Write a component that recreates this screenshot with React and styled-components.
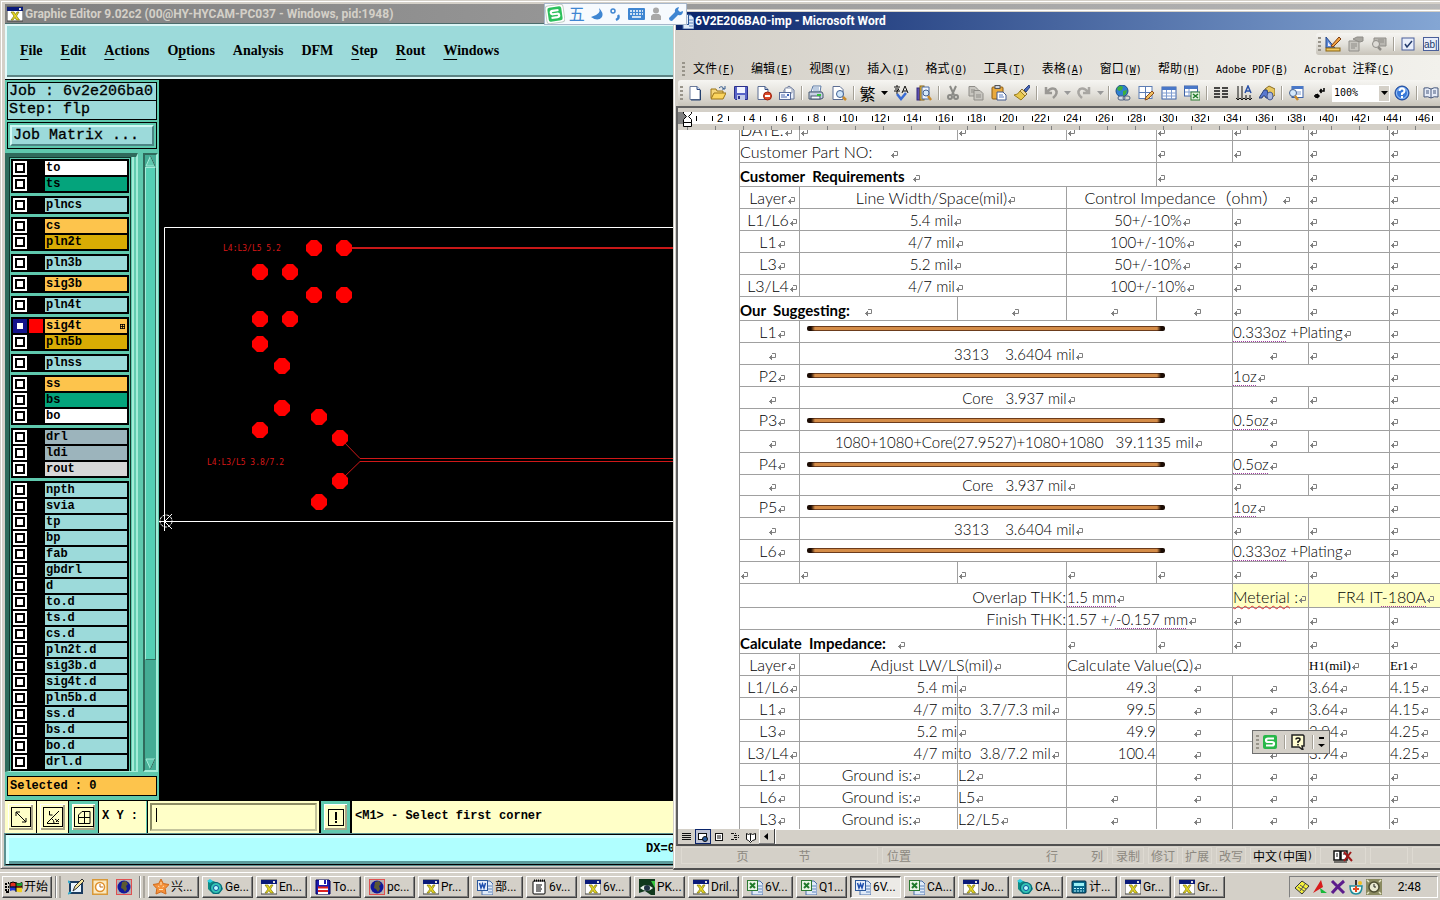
import React from "react";
import styled, { createGlobalStyle, css } from "styled-components";

const ui = `"Liberation Sans", "Noto Sans CJK SC", sans-serif`;
const tahoma = `"Noto Sans", "Noto Sans CJK SC", sans-serif`;
const caption = `Roboto, "Noto Sans CJK SC", sans-serif`;
const mono = `"Liberation Mono", monospace`;
const hand = `"Comic Sans MS", Lato, "Noto Sans CJK SC", sans-serif`;

const GlobalStyle = createGlobalStyle`
  * { box-sizing: border-box; }
  body {
    margin: 0;
    font-family: ${ui};
    font-size: 12px;
    color: #000;
    background: #d4d0c8;
  }
  button, input, select {
    margin: 0;
    padding: 0;
    border: 0;
    border-radius: 0;
    background: none;
    font: inherit;
    color: inherit;
  }
  svg { display: block; flex: none; }
`;

/* ---------- icons ---------- */

const shapes = {
  xwin: (
    <>
      <rect x="0" y="1" width="16" height="14" fill="#fff" stroke="#404040" />
      <rect x="0" y="1" width="16" height="4" fill="#0a1a7a" />
      <rect x="12" y="2" width="2" height="2" fill="#ddd" />
      <path d="M4 6h3l1.500 2.500L10 6h2l-2.500 4 3 4h-3L8 11.500 6 14H4l3-4z" fill="#e8d820" stroke="#7a7410" strokeWidth=".7" />
    </>
  ),
  excel: (
    <>
      <path d="M5 2h8l3 3v11H5z" fill="#dfeaf8" stroke="#4a6fa8" />
      <path d="M11 7h4M11 10h4M11 13h4" stroke="#5c83bb" />
      <rect x="0.500" y="1.500" width="10" height="10" fill="#e9f4e4" stroke="#2c7a33" />
      <path d="M3 4l5 5M8 4L3 9" stroke="#1f7a2a" strokeWidth="2" />
    </>
  ),
  word: (
    <>
      <path d="M5 2h8l3 3v11H5z" fill="#dfeaf8" stroke="#4a6fa8" />
      <path d="M11 7h4M11 10h4M11 13h4" stroke="#5c83bb" />
      <rect x="0.500" y="1.500" width="10" height="10" fill="#e8effa" stroke="#2b579a" />
      <path d="M2.500 4l1.500 5 1.500-4L7 9l1.500-5" fill="none" stroke="#1d4fae" strokeWidth="1.500" />
    </>
  ),
  star: (
    <>
      <path d="M8 0l2.300 4.600L16 5.500l-3.800 4L13 15l-5-2.200L3 15l.8-5.500L0 5.500l5.700-.9z" fill="#f5923c" stroke="#cf6a1c" />
      <path d="M5 7l1.500 1M11 7L9.500 8M6 10.500h4M8 3v3" stroke="#ffe2b8" />
    </>
  ),
  disc: (
    <>
      <path d="M1 3l5-1 8 3 2 5-4 5H6L1 10z" fill="#0c8b84" />
      <circle cx="9" cy="9" r="5.500" fill="#33c3b4" stroke="#075d74" />
      <circle cx="9" cy="9" r="2.500" fill="#bff" stroke="#0b4c9a" />
      <path d="M0 2l3-2 3 2-3 2z" fill="#24d0e4" />
    </>
  ),
  floppy2: (
    <>
      <path d="M1 1h13l1 1v13H1z" fill="#1a1ab0" stroke="#000058" />
      <rect x="4" y="1" width="8" height="5" fill="#fff" />
      <rect x="9" y="1" width="2" height="4" fill="#1a1ab0" />
      <rect x="3" y="8" width="10" height="7" fill="#fff" />
      <path d="M3 8.500h10M3 12h10" stroke="#d22" strokeWidth="2" />
    </>
  ),
  globe2: (
    <>
      <rect width="16" height="16" fill="#b8aeb0" />
      <rect x=".5" y=".5" width="15" height="15" fill="none" stroke="#e05050" />
      <circle cx="8" cy="8" r="6.500" fill="#10189a" />
      <path d="M6 3l4-1 2 3-2 2 1 3-2 3-2-3-2-1z" fill="#5c5a30" />
    </>
  ),
  note: (
    <>
      <rect x="2" y="2" width="12" height="13" rx="1" fill="#fff" stroke="#000" />
      <path d="M3 1.500h11" stroke="#000" strokeWidth="2" strokeDasharray="1 1" />
      <path d="M5 6h6M5 8h5M5 10h6M5 12h5" stroke="#000" />
    </>
  ),
  eye: (
    <>
      <rect width="16" height="16" fill="#10381c" />
      <path d="M0 2h12l4 7V2z" fill="#38c840" />
      <path d="M1 9q6-6 13 0-6 6-13 0z" fill="#e8f0e8" />
      <circle cx="8" cy="9" r="3" fill="#234" />
      <path d="M0 14l6-2 6 4H0z" fill="#ccc" />
    </>
  ),
  calc: (
    <>
      <rect x="1" y="2" width="14" height="12" rx="1" fill="#0a6a8c" stroke="#012c44" />
      <rect x="3" y="4" width="10" height="3" fill="#9cf0f4" />
      <path d="M3 9.500h10M3 12h10" stroke="#bff6ff" strokeDasharray="2 1" />
    </>
  ),
  flag: (
    <>
      <path d="M5 4q3-2 6 0t6-.5v6q-3 1-6 0t-6 0z" fill="#e03020" stroke="#000" />
      <path d="M11 4q3 1 6-.5v3q-3 1-6 0z" fill="#18a030" />
      <path d="M5 8q3-1.500 6 0v4q-3-1.500-6 0z" fill="#2038d0" />
      <path d="M11 8q3 1 6 0v5q-3 1-6-1z" fill="#f0d020" />
      <path d="M0 5h2M3 4h1M0 8h2M3 8h1M0 11h2M3 11h1M1 13h3" stroke="#000" strokeWidth="2" />
      <path d="M11 3v10M5 8h12" stroke="#000" />
    </>
  ),
  desk: (
    <>
      <rect x="1" y="2" width="14" height="13" fill="#1c3c60" />
      <rect x="3" y="4" width="10" height="9" fill="#e8f4ff" />
      <path d="M5 12l2-5 7-7 2 2-7 7z" fill="#f4e4a0" stroke="#333" />
      <path d="M0 2l2 2M0 15l3-2" stroke="#3ac" strokeWidth="2" />
    </>
  ),
  clock: (
    <>
      <rect x=".5" y=".5" width="15" height="15" fill="#fbe9c0" stroke="#d89838" strokeWidth="2" />
      <circle cx="8" cy="8" r="4.500" fill="#fff" stroke="#e0902c" strokeWidth="1.500" />
      <path d="M8 5v3h3" stroke="#b86a10" fill="none" />
    </>
  ),
  newDoc: (
    <>
      <path d="M3 1.500h7l3 3v10H3z" fill="#fff" stroke="#6b7a99" />
      <path d="M10 1.500v3h3" fill="#cfdcf2" stroke="#2f4a80" />
      <path d="M13.500 5v10H4" stroke="#24406e" fill="none" />
    </>
  ),
  open: (
    <>
      <path d="M1 13V4h5l1 2h6v2" fill="#f5d67c" stroke="#9b7416" />
      <path d="M1 14l3-6h12l-3 6z" fill="#fbd55e" stroke="#9b7416" />
      <path d="M9 3q3-3 5 1M15 1v3h-3" fill="none" stroke="#33598c" />
    </>
  ),
  save: (
    <>
      <path d="M1.500 1.500h13v13h-12l-1-1z" fill="#5964c8" stroke="#2b2f8a" />
      <rect x="4" y="2" width="8" height="6" fill="#f2f4ff" />
      <rect x="4" y="10" width="8" height="5" fill="#c4cbe8" />
      <rect x="5" y="11" width="2" height="3" fill="#2b2f8a" />
    </>
  ),
  perm: (
    <>
      <path d="M2 1.500h7l3 3v10H2z" fill="#fff" stroke="#5b6d93" />
      <path d="M9 1.500v3h3" fill="none" stroke="#2f4a80" />
      <circle cx="11.500" cy="11" r="4" fill="#dd4a2a" stroke="#9c220e" />
      <rect x="9" y="10" width="5" height="2" fill="#fff" />
    </>
  ),
  mail: (
    <>
      <path d="M5 5l5-4 5 4v9H5z" fill="#e8eefa" stroke="#6a7898" />
      <path d="M6 3h7v5H6z" fill="#fff" stroke="#8a95ad" />
      <rect x="0.500" y="7.500" width="11" height="7" fill="#f5f8ff" stroke="#5a6c98" />
      <path d="M2 10h4M2 12h6" stroke="#4a66a8" />
      <rect x="8" y="9" width="2" height="2" fill="#3b62b8" />
    </>
  ),
  print: (
    <>
      <path d="M5 1h8l-1 6H3z" fill="#fff" stroke="#5c7aa6" />
      <path d="M5 3h6M5 5h6" stroke="#7a9ac4" />
      <path d="M1 7h13l1 2v4l-2 1H1z" fill="#c8d2e4" stroke="#44566f" />
      <rect x="3" y="11" width="9" height="3" fill="#f8faff" stroke="#44566f" />
      <rect x="9" y="9" width="4" height="2" fill="#33c43a" />
    </>
  ),
  preview: (
    <>
      <path d="M2 1.500h7l3 3v10H2z" fill="#fff" stroke="#5b6d93" />
      <circle cx="9" cy="9" r="3.500" fill="#cfe6fb" stroke="#3f5f90" />
      <path d="M12 12l3 3" stroke="#c98b2c" strokeWidth="2.500" />
    </>
  ),
  spell: (
    <>
      <path d="M1 2h6M4 0v2M2 4h4L4 6v3M1 6h6" stroke="#111" fill="none" />
      <path d="M9 8l3-7 3 7M10 6h4" stroke="#111" fill="none" />
      <path d="M4 9l4 5 5-6" stroke="#3a6cd4" strokeWidth="2.500" fill="none" />
    </>
  ),
  research: (
    <>
      <rect x="1" y="3" width="3" height="12" fill="#5b4fb0" stroke="#33297c" />
      <rect x="4" y="1" width="4" height="14" fill="#f2c34a" stroke="#8a6410" />
      <path d="M6 2h7v12H6z" fill="#eef4ff" stroke="#4b6aa0" />
      <circle cx="10" cy="8" r="3" fill="#d4e8fb" stroke="#44608f" />
      <path d="M12 11l3 4" stroke="#c98b2c" strokeWidth="2.500" />
    </>
  ),
  cut: (
    <>
      <path d="M5 1l4 9M11 1L7 10" stroke="#8a8a86" strokeWidth="2" />
      <circle cx="5" cy="12" r="2" fill="none" stroke="#8a8a86" strokeWidth="2" />
      <circle cx="11" cy="12" r="2" fill="none" stroke="#8a8a86" strokeWidth="2" />
    </>
  ),
  copy: (
    <>
      <path d="M1 1.500h6l3 3V11H1z" fill="#c8c6c0" stroke="#8f8d88" />
      <path d="M6 5.500h6l3 3V15H6z" fill="#c8c6c0" stroke="#8f8d88" />
      <path d="M3 5h4M3 7h3M8 10h5M8 12h5" stroke="#8f8d88" />
    </>
  ),
  paste: (
    <>
      <rect x="1" y="2" width="11" height="12" rx="1" fill="#e9a93c" stroke="#8a5a10" />
      <rect x="4" y="0.500" width="5" height="3" fill="#ccd4e4" stroke="#555" />
      <path d="M6 7h6l3 3v5H6z" fill="#fff" stroke="#41588c" />
      <path d="M8 10h4M8 12h5" stroke="#5b7cc0" />
    </>
  ),
  brush: (
    <>
      <path d="M15 0l-5 5 2 2 4-5z" fill="#4c69b8" stroke="#28407c" />
      <path d="M8 4l5 5-2 2-5-5z" fill="#f0d890" stroke="#8a7030" />
      <path d="M6 6l5 5-4 4-7-5q4 0 6-4z" fill="#e8c84c" stroke="#9a7c20" />
    </>
  ),
  undo: <path d="M3 2v6h6M4 7q4-5 8-3 4 4-2 9" fill="none" stroke="#9a9894" strokeWidth="2.500" />,
  redo: <path d="M13 2v6H7M12 7Q8 2 4 4q-4 4 2 9" fill="none" stroke="#a8a6a2" strokeWidth="2.500" />,
  link: (
    <>
      <circle cx="7" cy="6" r="6" fill="#2f7fd0" stroke="#1c4f88" />
      <path d="M3 2q3-2 5 0l-1 3-3 1-2-2zM8 6l4-1-1 4-3 2z" fill="#3fae3c" />
      <rect x="3" y="11" width="7" height="4" rx="2" fill="#d5dce8" stroke="#4c5f80" />
      <rect x="8" y="11" width="7" height="4" rx="2" fill="none" stroke="#4c5f80" />
    </>
  ),
  drawTable: (
    <>
      <rect x="1" y="1.500" width="13" height="12" fill="#fff" stroke="#5b7cb4" />
      <path d="M7.500 2v12M1 7.500h13" stroke="#5b7cb4" />
      <path d="M7 15l1-3 6-6 2 2-6 6z" fill="#f0c060" stroke="#8a4c20" />
    </>
  ),
  table: (
    <>
      <rect x="1" y="2" width="14" height="12" fill="#fff" stroke="#3d63a8" />
      <rect x="1" y="2" width="14" height="3" fill="#4a78c8" />
      <path d="M1 8h14M1 11h14M5.500 5v9M10.500 5v9" stroke="#7e9cd0" />
    </>
  ),
  sheet: (
    <>
      <rect x="0.500" y="1" width="13" height="10" fill="#fff" stroke="#3d63a8" />
      <rect x="0.500" y="1" width="13" height="3" fill="#4a78c8" />
      <path d="M1 7h12M5 4v7" stroke="#7e9cd0" />
      <rect x="7" y="7" width="9" height="8" fill="#e4f2e0" stroke="#2c7a33" />
      <path d="M9 9l5 4M14 9l-5 4" stroke="#1f7a2a" strokeWidth="1.500" />
    </>
  ),
  columns: <path d="M1 3h6M1 6h6M1 9h6M1 12h6M9 3h6M9 6h6M9 9h6M9 12h6" stroke="#111" strokeWidth="1.500" />,
  textDir: (
    <>
      <path d="M2 1v13M6 1v13M10 10v4M14 10v4M0 13l2 2 2-2M4 13l2 2 2-2M8 13l2 2 2-2M12 13l2 2 2-2" stroke="#111" fill="none" />
      <path d="M9 8l3-7 3 7M10 6h4" stroke="#2a52a8" strokeWidth="1.500" fill="none" />
    </>
  ),
  drawing: (
    <>
      <path d="M6 4l4-3 6 3v6l-4 3-6-3z" fill="#e8c860" stroke="#8a6c20" />
      <path d="M0 13l5-8h3l2 8H7l-1-2H4l-1 2z" fill="#5878d0" stroke="#28407c" />
      <ellipse cx="11" cy="11" rx="3" ry="4" fill="#a8b8e0" stroke="#44568c" />
    </>
  ),
  docMap: (
    <>
      <rect x="4" y="1.500" width="11" height="11" fill="#fff" stroke="#3d63a8" />
      <rect x="4" y="1" width="11" height="3" fill="#4a78c8" />
      <path d="M8 7h5M8 9h5" stroke="#7e9cd0" />
      <circle cx="5" cy="8" r="3.500" fill="#d4e8fb" stroke="#44608f" />
      <path d="M7 11l3 4" stroke="#c98b2c" strokeWidth="2.500" />
    </>
  ),
  marks: (
    <>
      <path d="M13 3v3H9M10.500 4L9 6l1.500 2" fill="none" stroke="#000" strokeWidth="1.500" />
      <path d="M3 11h5M6 9l2 2-2 2M5 9v4" fill="none" stroke="#000" strokeWidth="1.500" />
    </>
  ),
  help: (
    <>
      <circle cx="8" cy="8" r="7" fill="#3878d8" stroke="#1c4494" />
      <circle cx="8" cy="8" r="5.500" fill="none" stroke="#9cc4f8" />
      <path d="M5.500 6q0-2.500 2.500-2.500T10.500 6Q10.500 7.500 8 8.500V10M8 11v2" fill="none" stroke="#fff" strokeWidth="2" />
    </>
  ),
  read: (
    <>
      <path d="M1 3q4-1 7 1 3-2 7-1v9q-4-1-7 1-3-2-7-1z" fill="#e6ecf8" stroke="#47587c" />
      <path d="M8 4v9M3 6h3M3 8h3M10 6h3M10 8h3" stroke="#47587c" />
    </>
  ),
  design: (
    <>
      <path d="M1 1v11h9z" fill="#5c8ad8" stroke="#24488c" />
      <path d="M3 6v4h3z" fill="#eef" />
      <rect x="1" y="12" width="14" height="3" fill="#f0c860" stroke="#8a6410" />
      <path d="M6 10l8-9 2 2-8 8z" fill="#f0a040" stroke="#7c3c10" />
    </>
  ),
  props: (
    <>
      <path d="M1 5h10v10H1z" fill="#c8c6c0" stroke="#8f8d88" />
      <path d="M3 8h6M3 10h6M3 12h4" stroke="#8f8d88" />
      <path d="M5 3l4-2h6v4l-3 1-3-1z" fill="#a8a6a0" stroke="#8f8d88" />
    </>
  ),
  code: (
    <>
      <path d="M3 2h12v8H3z" fill="#b8b6b0" stroke="#8f8d88" />
      <path d="M7 4h6M7 6h6" stroke="#8f8d88" />
      <circle cx="5" cy="8" r="3.500" fill="#dddbd6" stroke="#8f8d88" />
      <path d="M7 11l3 3" stroke="#8f8d88" strokeWidth="2.500" />
    </>
  ),
  tick: (
    <>
      <rect x="2" y="2" width="12" height="12" fill="#e8eefb" stroke="#4a5f9a" />
      <path d="M5 8l2 3 5-6" stroke="#223a6c" strokeWidth="1.500" fill="none" />
    </>
  ),
  viewLines: <path d="M3 4.500h9M3 6.500h9M3 8.500h9M3 10.500h9" stroke="#111" />,
  viewWeb: (
    <>
      <rect x="3.500" y="4.500" width="8" height="6" fill="#fff" stroke="#111" />
      <circle cx="10" cy="10" r="2.500" fill="#2a5ca0" stroke="#111" />
    </>
  ),
  viewPrint: (
    <>
      <rect x="4.500" y="4.500" width="7" height="7" fill="#fff" stroke="#111" />
      <path d="M6 7h4M6 9h4" stroke="#111" />
    </>
  ),
  viewOutline: <path d="M4 4.500h5M7 6.500h5M7 8.500h5M4 10.500h6" stroke="#111" strokeDasharray="3 1" />,
  viewRead: <path d="M3.500 4.500l2 1 2-1 2 1 3-1v6l-3 1-2 2-2-2-2-1zM7.500 5v7" fill="#fff" stroke="#111" />,
  bookX: (
    <>
      <path d="M1 3h6v9H1zM8 3h6v9H8z" fill="#fff" stroke="#111" strokeWidth="1.500" />
      <path d="M3 6h2M3 8h2M10 6h2M1 14h13" stroke="#111" />
      <path d="M11 4l8 9M18 4l-7 9" stroke="#a01818" strokeWidth="2" />
    </>
  ),
  sLogo: (
    <>
      <rect x="1" y="1" width="14" height="14" rx="2" fill="#28b84a" />
      <path d="M12 4.500H6q-2 0-2 1.700T6 8h4q2 0 2 1.700t-2 1.800H4" fill="none" stroke="#fff" strokeWidth="2.200" />
    </>
  ),
  sLogoTilt: (
    <g transform="rotate(-8 10 10)">
      <rect x="1" y="1" width="18" height="18" rx="3" fill="#fff" stroke="#c4d0c8" />
      <rect x="3" y="3" width="14" height="14" rx="2" fill="#2cc05c" />
      <path d="M14 6.500H8q-2 0-2 1.700T8 10h4q2 0 2 1.700t-2 1.800H6" fill="none" stroke="#fff" strokeWidth="2.200" />
    </g>
  ),
  ask: (
    <>
      <path d="M2 1h11l1 1v10h-2l1 4-4-3H2z" fill="#fffcd0" stroke="#222" strokeWidth="1.500" />
      <path d="M6 5.500q0-1.500 2-1.500t2 1.500Q10 7 8 7.500V9M8 10v1.500" fill="none" stroke="#111" strokeWidth="1.500" />
    </>
  ),
  moon: <path d="M11 2q3 6-8 9 7 5 11 0 2-4-3-9z" fill="#3f86d2" />,
  punct: (
    <>
      <circle cx="5" cy="5" r="2" fill="none" stroke="#3f86d2" strokeWidth="1.500" />
      <path d="M10 9q2 3-2 5" fill="none" stroke="#3f86d2" strokeWidth="2.500" />
    </>
  ),
  keyboard: (
    <>
      <rect x="0" y="2" width="17" height="12" rx="1" fill="#3f86d2" />
      <path d="M2 5h13M2 8h13" stroke="#fff" strokeWidth="1.500" strokeDasharray="2 1" />
      <path d="M4 11h9" stroke="#fff" strokeWidth="1.500" />
    </>
  ),
  person: (
    <>
      <circle cx="8" cy="4.500" r="3" fill="#a8a8a8" />
      <path d="M3 14v-4l2-2h6l2 2v4z" fill="#a8a8a8" />
    </>
  ),
  wrench: <path d="M1 12l6-6q-1-4 4-5l-1 3 2 2 3-1q0 5-5 4l-6 6q-3 0-3-3z" fill="#3f86d2" />,
  tray1: (
    <>
      <path d="M1 9l7-7 7 5-7 8z" fill="#f4f03c" stroke="#333" />
      <path d="M4 8l6 4M6 6l6 4M6 12l5-7" stroke="#555" />
    </>
  ),
  tray2: (
    <>
      <path d="M9 1l2 7-10 6z" fill="#d81c1c" />
      <path d="M8 9l7 5h-6z" fill="#18b838" />
    </>
  ),
  tray3: <path d="M2 2q5 5 12 12M14 2Q8 7 2 14" stroke="#5c1c8c" strokeWidth="3" fill="none" />,
  tray4: (
    <>
      <path d="M2 7q0 8 6 8t6-8z" fill="#f8f8f0" stroke="#1c8c9c" strokeWidth="1.500" />
      <path d="M7 1h2v5H7z" fill="#333" />
      <path d="M5 10h6M8 7v6" stroke="#e04820" strokeWidth="2" />
      <circle cx="12" cy="4" r="2" fill="#f0c020" />
    </>
  ),
  tray5: (
    <>
      <rect width="16" height="16" fill="#8a8a60" />
      <circle cx="8" cy="8" r="5" fill="#e8e8d0" stroke="#4c4c30" strokeWidth="1.500" />
      <path d="M8 5v3l2 2M1 1l2 2M15 1l-2 2M1 15l2-2M15 15l-2-2" stroke="#e8e8c8" fill="none" strokeWidth="1.500" />
      <path d="M8 5v3h2" stroke="#222" fill="none" />
    </>
  ),
  corner: (
    <>
      <rect x=".5" y=".5" width="19" height="19" fill="none" stroke="#000" />
      <path d="M5 5l10 10M5 9V5h4M15 11v4h-4" fill="none" stroke="#000" />
    </>
  ),
  angle: (
    <>
      <rect x=".5" y=".5" width="19" height="19" fill="none" stroke="#000" />
      <path d="M4 16L16 4M4 16.500h12M6.500 4v4h3M9 12q2 1 2 4M12 12l4 3M16 12l-3 3" fill="none" stroke="#000" />
    </>
  ),
  gridIcon: (
    <>
      <rect x=".5" y=".5" width="19" height="19" fill="none" stroke="#000" />
      <path d="M8 4.500h8v12H4.500V8zM10.500 4v12M4 10.500h12" fill="none" stroke="#000" />
    </>
  ),
  bang: (
    <>
      <rect x=".5" y=".5" width="15" height="16" fill="none" stroke="#000" />
      <path d="M8 3v8M8 12v2" stroke="#000" strokeWidth="2" />
    </>
  ),
};

function Icon({ name, w = 16, h = 16 }) {
  return (
    <svg width={w} height={h} viewBox={`0 0 ${w} ${h}`} fill="none" aria-hidden="true">
      {shapes[name]}
    </svg>
  );
}

const MarkSvg = styled.svg`
  display: inline-block;
  vertical-align: -1px;
`;

function Mark() {
  return (
    <MarkSvg width="8" height="9" viewBox="0 0 8 9" fill="none" aria-hidden="true">
      <path d="M4 1.500h3.500v4H1M3.500 3v5M1.500 5.500l2-2v4z" stroke="#808080" />
    </MarkSvg>
  );
}

/* ---------- desktop ---------- */

const Screen = styled.div`
  height: 100vh;
  display: flex;
  flex-direction: column;
  overflow: hidden;
`;

const Desktop = styled.main`
  flex: 1;
  position: relative;
  overflow: hidden;
`;

/* ---------- graphic editor ---------- */

const EditorWindow = styled.section`
  position: absolute;
  inset: 0 -6px 3px 0;
  display: flex;
  flex-direction: column;
  padding: 2px 3px;
  background: #d4d0c8;
  border: 1px solid #d4d0c8;
  border-bottom-color: #606060;
  box-shadow: inset 1px 1px #fff, inset 0 -1px #a0a0a0;
`;

const EditorTitle = styled.header`
  flex: none;
  height: 19px;
  margin: 1px 0 1px 1px;
  padding-left: 2px;
  display: flex;
  align-items: center;
  gap: 2px;
  background: linear-gradient(90deg, #808080, #b8b8b8);
  color: #d4d0c8;
  font: bold 12px/18px ${caption};
`;

const MenuBar = styled.nav`
  flex: none;
  height: 55px;
  display: flex;
  align-items: center;
  gap: 18px;
  padding: 0 0 2px 13px;
  background: #9cdada;
  border: 2px solid #e4fafa;
  border-top: 2px solid #dcf6f6;
  border-bottom-color: #dcf6f6;
  box-shadow: inset 0 -2px #5c8484, 0 -1px #4c6c6c;
  margin-left: 1px;
`;

const MenuButton = styled.button`
  font: bold 14px/20px "Liberation Serif", serif;
`;

const Key = styled.span`
  text-decoration: underline;
  text-underline-offset: 4px;
`;

const EditorBody = styled.div`
  flex: 1;
  min-height: 0;
  display: flex;
  margin-left: 1px;
  background: #000;
`;

const Sidebar = styled.aside`
  width: 154px;
  display: flex;
  flex-direction: column;
  padding: 2px 2px 1px;
  background: #5fc9ae;
  border-top: 1px solid #000;
`;

const InfoLine = styled.div`
  flex: none;
  height: 19px;
  border: 1px solid #000;
  padding-left: 1px;
  background: #9cdada;
  font: 15px/17px ${mono};
  -webkit-text-stroke: 0.3px #000;
  white-space: pre;

  & + & {
    margin-top: -1px;
    height: 20px;
    line-height: 18px;
  }
`;

const MatrixFrame = styled.div`
  flex: none;
  height: 27px;
  margin-top: 2px;
  padding: 2px;
  display: flex;
  border: 1px solid #000;
`;

const MatrixButton = styled.button`
  flex: 1;
  padding-left: 1px;
  text-align: left;
  background: #9cdada;
  border: 2px solid;
  border-color: #d0f8f4 #4c8484 #4c8484 #d0f8f4;
  font: 15px/17px ${mono};
  -webkit-text-stroke: 0.3px #000;
`;

const LayerArea = styled.div`
  flex: 1;
  min-height: 0;
  display: flex;
  justify-content: space-between;
  margin: 4px -1px 4px -2px;
`;

const LayerPanel = styled.div`
  width: 133px;
  display: flex;
  padding-right: 2px;
  border: 4px solid #2f6b5c;
  border-right: 2px solid #a4ecd8;
  border-bottom: 1px solid #a4ecd8;
  box-shadow: inset -2px 0 #62cbb0, inset -4px 0 #a4ecd8;
`;

const LayerList = styled.div`
  flex: 1;
  min-width: 0;
  margin-right: 3px;
  padding: 1px 1px 0;
  display: flex;
  flex-direction: column;
  gap: 3px;
  overflow: hidden;
  border: 1px solid #10382c;
  border-bottom: 0;
`;

const LayerGroup = styled.div`
  flex: none;
  display: grid;
  gap: 2px;
  padding: 2px;
  background: #000;
`;

const LayerRow = styled.div`
  height: 14px;
  display: grid;
  grid-template-columns: 14px 14px 1fr;
  gap: 2px;
`;

const LayerCheck = styled.input`
  appearance: none;
  width: 14px;
  height: 14px;
  background: #fff;
  border: 2px solid #fff;
  box-shadow: inset 0 0 0 2px #000;

  &:checked {
    border-color: #14148c;
    box-shadow: inset 0 0 0 2px #14148c;
  }
`;

const Swatch = styled.span`
  background: ${(p) => p.$color || "#000"};
`;

const LayerName = styled.label`
  padding: 0 2px 0 1px;
  display: flex;
  align-items: center;
  justify-content: space-between;
  background: ${(p) => p.$color};
  font: bold 12px/14px ${mono};
`;

const ScrollBar = styled.div`
  width: 15px;
  display: flex;
  flex-direction: column;
  align-items: center;
  background: #44ac94;
  border: 2px solid;
  border-color: #2f6b5c #a4ecd8 #a4ecd8 #2f6b5c;
`;

const ScrollThumb = styled.div`
  flex: 0 1 493px;
  width: 100%;
  background: #54d0b4;
  border: 1px solid;
  border-color: #a4ecd8 #2f6b5c #2f6b5c #a4ecd8;
`;

const Spacer = styled.div`
  flex: ${(p) => (p.$w ? `0 0 ${p.$w}px` : 1)};
`;

const SelectedBox = styled.div`
  flex: none;
  height: 20px;
  margin-bottom: 3px;
  padding-left: 2px;
  background: #fdc44c;
  border: 1px solid #000;
  font: bold 12px/18px ${mono};
`;

const Canvas = styled.svg`
  flex: 1;
  height: 100%;
`;

const PromptRow = styled.div`
  flex: none;
  height: 34px;
  display: flex;
  gap: 1px;
  margin-left: 1px;
  padding: 1px 0 1px 0;
  background: #000;
`;

const ToolButton = styled.button`
  width: ${(p) => (p.$narrow ? 29 : 31)}px;
  display: grid;
  place-items: center;
  background: #ffffc8;
  border: 3px solid ${(p) => (p.$on ? "#5fc9ae" : "#ffffc8")};
  box-shadow: inset 1px 1px #fff, inset -2px -2px #a8a488;
`;

const CoordLabel = styled.label`
  width: 48px;
  padding-left: 3px;
  background: #ffffc8;
  border-right: 1px solid #5fc9ae;
  font: bold 12px/30px ${mono};
  white-space: pre;
`;

const CoordBox = styled.div`
  width: 171px;
  display: flex;
  padding: 2px;
  background: #ffffc8;
  margin-right: 1px;
`;

const CoordInput = styled.input`
  flex: 1;
  min-width: 0;
  padding-left: 4px;
  background: linear-gradient(#ffffc8 3px, transparent 3px calc(100% - 7px), #ffffc8 calc(100% - 7px)),
    linear-gradient(90deg, transparent 4px, #000 4px 5px, transparent 5px),
    #ffffc8;
  border: 2px solid;
  border-color: #8c8c64 #c4c49c #c4c49c #8c8c64;
  font: bold 12px/20px ${mono};
`;

const Prompt = styled.div`
  flex: 1;
  padding-left: 3px;
  margin-left: 1px;
  background: #ffffc8;
  font: bold 12px/31px ${mono};
  white-space: pre;
`;

const CoordBar = styled.div`
  flex: none;
  height: 31px;
  margin: 0 0 1px 1px;
  padding-left: calc(45% - 7px);
  background: #b0ffff;
  border: 1px solid #000;
  border-left-color: #5c9090;
  box-shadow: inset 3px 3px #d4ffff, inset -2px -3px #5c9c9c;
  outline: 1px solid #5c9090;
  font: bold 12px/29px ${mono};
`;

const layerGroups = [
  [["to", "#fff"], ["ts", "#04a47c"]],
  [["plncs", "#9cdada"]],
  [["cs", "#fdc44c"], ["pln2t", "#d8ac04"]],
  [["pln3b", "#9cdada"]],
  [["sig3b", "#fdc44c"]],
  [["pln4t", "#9cdada"]],
  [["sig4t", "#fdc44c"], ["pln5b", "#d8ac04"]],
  [["plnss", "#9cdada"]],
  [["ss", "#fdc44c"], ["bs", "#04a47c"], ["bo", "#fff"]],
  [["drl", "#9cb4bc"], ["ldi", "#9cb4bc"], ["rout", "#d8d8d8"]],
  ["npth", "svia", "tp", "bp", "fab", "gbdrl", "d", "to.d", "ts.d", "cs.d", "pln2t.d",
    "sig3b.d", "sig4t.d", "pln5b.d", "ss.d", "bs.d", "bo.d", "drl.d"].map((n) => [n, "#9cdada"]),
];

const editorMenus = [
  ["", "F", "ile"], ["", "E", "dit"], ["", "A", "ctions"], ["O", "p", "tions"],
  ["Analysis", "", ""], ["DFM", "", ""], ["", "S", "tep"], ["", "R", "out"], ["", "W", "indows"],
];

// pad centres, in canvas units
const pads = [
  [155, 169], [185, 169], [101, 193], [131, 193], [155, 216], [185, 216],
  [101, 240], [131, 240], [101, 265], [123, 287], [123, 329], [160, 338],
  [101, 351], [181, 359], [181, 402], [160, 423],
];

function Editor() {
  return (
    <EditorWindow>
      <EditorTitle>
        <Icon name="xwin" />
        Graphic Editor 9.02c2 (00@HY-HYCAM-PC037 - Windows, pid:1948)
      </EditorTitle>
      <MenuBar>
        {editorMenus.map(([a, k, b]) => (
          <MenuButton key={a + k + b}>{a}{k && <Key>{k}</Key>}{b}</MenuButton>
        ))}
      </MenuBar>
      <EditorBody>
        <Sidebar>
          <InfoLine>Job : 6v2e206ba0</InfoLine>
          <InfoLine>Step: flp</InfoLine>
          <MatrixFrame>
            <MatrixButton>Job Matrix ...</MatrixButton>
          </MatrixFrame>
          <LayerArea>
            <LayerPanel>
              <LayerList>
                {layerGroups.map((group) => (
                  <LayerGroup key={group[0][0]}>
                    {group.map(([name, color]) => (
                      <LayerRow key={name}>
                        <LayerCheck type="checkbox" id={`layer-${name}`} defaultChecked={name === "sig4t"} />
                        <Swatch $color={name === "sig4t" && "#f00"} />
                        <LayerName htmlFor={`layer-${name}`} $color={color}>
                          {name}
                          {name === "sig4t" && (
                            <svg width="5" height="5" viewBox="0 0 5 5">
                              <path d="M0 .5h5M0 2.500h5M0 4.500h5M.5 0v5M2.500 0v5M4.500 0v5" stroke="#000" strokeWidth=".8" />
                            </svg>
                          )}
                        </LayerName>
                      </LayerRow>
                    ))}
                  </LayerGroup>
                ))}
              </LayerList>
            </LayerPanel>
            <ScrollBar>
              <svg width="11" height="12" viewBox="0 0 11 12">
                <path d="M5.500 1L10 11H1z" fill="#5fc9ae" stroke="#a4ecd8" />
                <path d="M5.500 1L10 11" stroke="#2f6b5c" />
              </svg>
              <ScrollThumb />
              <Spacer />
              <svg width="11" height="12" viewBox="0 0 11 12">
                <path d="M5.500 11L10 1H1z" fill="#5fc9ae" stroke="#a4ecd8" />
                <path d="M5.500 11L10 1" stroke="#2f6b5c" />
              </svg>
            </ScrollBar>
          </LayerArea>
          <SelectedBox>Selected : 0</SelectedBox>
        </Sidebar>
        <Canvas fill="none">
          <path d="M2000 148.500H5.500V442.500H2000" stroke="#fff" />
          <path d="M0 442.500h13M5.500 433v19M6 442l7-7M6 443l7 7" stroke="#fff" />
          <circle cx="7" cy="442" r="6" stroke="#fff" strokeDasharray="3 1" />
          <path d="M185 169H2000" stroke="#c81818" strokeWidth="2" />
          <path d="M181 359l20 20.500H2000M181 402l20-19.500H2000" stroke="#d01818" />
          {pads.map(([x, y]) => (
            <path
              key={`${x}-${y}`}
              d={`M${x - 3} ${y - 8}h6l5 5v6l-5 5h-6l-5-5v-6z`}
              fill="#f00"
            />
          ))}
          <text x="64" y="172" fill="#d81818" fontFamily="DejaVu Sans Mono" fontSize="8">L4:L3/L5 5.2</text>
          <text x="48" y="386" fill="#d81818" fontFamily="DejaVu Sans Mono" fontSize="8">L4:L3/L5 3.8/7.2</text>
        </Canvas>
      </EditorBody>
      <PromptRow>
        <ToolButton aria-label="Select"><Icon name="corner" w={20} h={20} /></ToolButton>
        <ToolButton aria-label="Angle"><Icon name="angle" w={20} h={20} /></ToolButton>
        <ToolButton aria-label="Grid" $narrow $on><Icon name="gridIcon" w={20} h={20} /></ToolButton>
        <CoordLabel htmlFor="xy">X Y :</CoordLabel>
        <CoordBox><CoordInput id="xy" defaultValue="" /></CoordBox>
        <ToolButton aria-label="Confirm" $narrow $on><Icon name="bang" h={17} /></ToolButton>
        <Prompt>{"<M1> - Select first corner"}</Prompt>
      </PromptRow>
      <CoordBar>DX=0.0</CoordBar>
    </EditorWindow>
  );
}

/* ---------- word ---------- */

const WordWindow = styled.section`
  position: absolute;
  inset: 9px 0 2px 673px;
  display: flex;
  flex-direction: column;
  padding: 2px 0 0 2px;
  background: #d4d0c8;
  border: 1px solid #d4d0c8;
  border-right: 0;
  border-bottom: 2px solid #505050;
  box-shadow: inset 1px 1px #fff;
`;

const WordTitle = styled.header`
  flex: none;
  height: 18px;
  padding-left: 2px;
  display: flex;
  align-items: center;
  gap: 1px;
  background: linear-gradient(90deg, #0a246a, #84a6d4);
  color: #fff;
  font: bold 12px/18px ${caption};
`;

const Bars = styled.div`
  flex: none;
  padding-left: 2px;
  background: linear-gradient(90deg, #d4d0c8, #f2f1ec);
`;

const barFace = css`
  display: flex;
  align-items: center;
  background: linear-gradient(#f6f5f2, #e4e2dc 50%, #c8c4ba);
  border-radius: 3px 0 0 3px;
`;

const ControlBar = styled.div`
  ${barFace}
  width: 124px;
  height: 22px;
  margin: 3px 0 0 auto;
  padding-left: 2px;
`;

const WordMenu = styled.nav`
  display: flex;
  align-items: center;
  height: 25px;
  gap: 16px;
  padding: 2px 0 0 4px;
`;

const WordMenuItem = styled.button`
  font: 12px/18px "Noto Sans CJK SC", sans-serif;
  white-space: pre;
`;

const Latin = styled.span`
  font: 10px/18px "DejaVu Sans Mono", monospace;
`;

const Grip = styled.span`
  flex: none;
  width: 3px;
  height: 14px;
  background: repeating-linear-gradient(#98948a 0 2px, transparent 2px 4px);
`;

const MenuGrip = styled(Grip)`
  margin-right: -8px;
`;

const Toolbar = styled.div`
  ${barFace}
  height: 26px;
  padding-left: 2px;
`;

const IconButton = styled.button`
  flex: none;
  width: 23px;
  height: 22px;
  display: grid;
  place-items: center;
  font: 16px/18px "Noto Sans CJK SC", sans-serif;
`;

const DropArrow = styled.button`
  flex: none;
  width: 10px;
  height: 22px;
  display: grid;
  place-items: center;
  color: ${(p) => (p.$dim ? "#999" : "#000")};
`;

const Divider = styled.span`
  flex: none;
  width: 1px;
  height: 14px;
  margin: 0 2px 0 3px;
  background: #a4a096;
  box-shadow: 1px 0 #fff;
`;

const Zoom = styled.div`
  flex: none;
  width: 58px;
  height: 17px;
  margin-left: 2px;
  display: flex;
  align-items: center;
  padding-right: 1px;
  background: #fff;
`;

const ZoomSelect = styled.select`
  flex: 1;
  min-width: 0;
  appearance: none;
  padding-left: 2px;
  font: 10px/16px "DejaVu Sans Mono", monospace;
`;

const ZoomArrow = styled.span`
  width: 10px;
  height: 15px;
  display: grid;
  place-items: center;
  background: #d4d0c8;
`;

const DocFrame = styled.div`
  flex: 1;
  min-height: 0;
  display: flex;
  flex-direction: column;
  border: 2px solid #606060;
  border-right: 0;
  border-bottom-color: #505050;
`;

const Ruler = styled.div`
  flex: none;
  height: 22px;
  padding-top: 4px;
  display: flex;
  align-items: flex-start;
  overflow: hidden;
  background:
    repeating-linear-gradient(90deg, transparent 0 9px, #808080 9px 10px, transparent 10px 28px) 0 100% / 100% 4px no-repeat,
    linear-gradient(#d4d0c8 0 4px, #fff 4px 16px, #d4d0c8 16px);
  font: 11px/12px ${ui};
`;

const RulerStart = styled.div`
  flex: none;
  width: 26px;
  height: 12px;
  display: flex;
  background: linear-gradient(90deg, #808080 10px, #fff 10px);
`;

const RulerCell = styled.div`
  flex: none;
  width: 32px;
  height: 12px;
  display: flex;
  justify-content: center;
  align-items: center;

  &::before, &::after {
    content: "";
    width: 1px;
    height: 5px;
    background: #000;
  }
`;

const RulerNum = styled.span`
  width: 15px;
  text-align: center;
`;

const Page = styled.div`
  flex: 1;
  min-height: 0;
  overflow: hidden;
  padding-left: 61px;
  background: #fff;
`;

const Sheet = styled.table`
  width: 723px;
  margin-top: -11px;
  table-layout: fixed;
  border-collapse: separate;
  border-spacing: 0;
  font: 300 16px/20px ${hand};
`;

const Row = styled.tr`
  height: ${(p) => p.$h || 22}px;
`;

const Cell = styled.td`
  padding: 0 0 0 ${(p) => (p.$inset ? 5 : 0)}px;
  text-align: ${(p) => p.$align || "left"};
  vertical-align: bottom;
  white-space: pre;
  border-left: 1px solid #a0a0a0;
  border-bottom: 1px solid #a0a0a0;
  ${(p) => p.$bold && "font-weight: bold; font-size: 15px;"}
  ${(p) => p.$num && "font-size: 15px;"}
  ${(p) => p.$fill && "background: #ffffc4;"}
  ${(p) => p.$small && "font: 13px/18px 'Liberation Serif', serif;"}
`;

const Copper = styled.div`
  width: 358px;
  height: 5px;
  margin: 0 0 ${(p) => p.$lift || 7}px 7px;
  border-radius: 2px;
  background:
    linear-gradient(90deg, #1c0c04 0 4px, transparent 8px calc(100% - 8px), #1c0c04 calc(100% - 4px)),
    linear-gradient(#6c3c1c 0 1px, #d48c48 1px 4px, #6c3c1c 4px);
`;

const Tag = styled.span`
  text-decoration: underline dotted #a03ca0 1px;
  text-underline-offset: 3px;
`;

const Typo = styled.span`
  text-decoration: underline wavy #e03030 1px;
  text-underline-offset: 2px;
`;

const ViewRow = styled.div`
  flex: none;
  height: 15px;
  display: flex;
  align-items: center;
  padding-left: 1px;
  background: #d4d0c8;
`;

const ViewButton = styled.button`
  width: 16px;
  height: 15px;
  display: grid;
  place-items: center;
  ${(p) => p.$on && "background: #c0c4d4; box-shadow: inset 0 0 0 1px #0a246a;"}
`;

const ScrollLeft = styled.button`
  width: 16px;
  height: 15px;
  display: grid;
  place-items: center;
  border-right: 1px solid #404040;
  border-bottom: 1px solid #808080;
  box-shadow: inset 1px 1px #fff;
`;

const HScroll = styled.div`
  flex: 1;
  height: 15px;
  border-left: 1px solid #fff;
  border-top: 1px solid #fff;
`;

const StatusBar = styled.footer`
  flex: none;
  height: 22px;
  display: flex;
  align-items: center;
  gap: 4px;
  padding: 0 0 3px 5px;
  color: #8c8880;
  font: 12px/16px "Noto Sans CJK SC", sans-serif;
`;

const StatusCell = styled.div`
  flex: none;
  width: ${(p) => p.$w}px;
  height: 17px;
  padding: 0 4px;
  display: flex;
  align-items: center;
  justify-content: ${(p) => p.$justify || "center"};
  border: 1px solid #dedad2;
  color: ${(p) => (p.$on ? "#000" : "inherit")};
  white-space: nowrap;
`;

const LangBar = styled.div`
  position: absolute;
  left: 578px;
  bottom: 114px;
  width: 78px;
  height: 24px;
  display: flex;
  align-items: center;
  justify-content: space-between;
  padding: 0 4px 0 3px;
  background: #d4d0c8;
  border: 1px solid #707070;
`;

function Caret({ left }) {
  return (
    <svg width={left ? 5 : 7} height={left ? 7 : 4} viewBox={left ? "0 0 5 7" : "0 0 7 4"}>
      <path d={left ? "M4 0v7L0 3.500z" : "M0 0h7L3.500 4z"} fill="currentColor" />
    </svg>
  );
}

const wordMenus = [
  ["文件", "F"], ["编辑", "E"], ["视图", "V"], ["插入", "I"], ["格式", "O"],
  ["工具", "T"], ["表格", "A"], ["窗口", "W"], ["帮助", "H"],
];

const toolbarItems = [
  "newDoc", "open", "save", "perm", "mail", "|", "print", "preview", "|", "繁", "v",
  "spell", "research", "|", "cut", "copy", "paste", "brush", "|", "undo", "v-", "redo", "v-", "|",
  "link", "drawTable", "table", "sheet", "|", "columns", "textDir", "drawing", "|", "docMap", "marks",
];

function ToolItem({ id }) {
  if (id === "|") return <Divider />;
  if (id[0] === "v") return <DropArrow aria-label="More" $dim={id === "v-"}><Caret /></DropArrow>;
  if (id === "繁") return <IconButton>繁</IconButton>;
  return <IconButton aria-label={id}><Icon name={id} /></IconButton>;
}

const cols = [60, 158, 109, 90, 76, 76, 81, 73];
const M = <Mark />;
const c = (body, span = 1, opts = {}) => ({ body, span, ...opts });
const mid = { $align: "center" };
const midNum = { $align: "center", $num: true };
const num = { $num: true };
const head = { $align: "center", $inset: true };
const marks = (n) => Array.from({ length: n }, () => c(M));

const ohm = (layer, width, value) => ({
  cells: [c(<>{layer}{M}</>, 1, head), c(<>{width}{M}</>, 2, { ...midNum, $inset: true }), c(<>{value}{M}</>, 2, { ...midNum, $inset: true }), ...marks(3)],
});
const foil = (layer, weight, rest, lift) => ({
  cells: [
    c(<>{layer}{M}</>, 1, head),
    c(<Copper $lift={lift} />, 4),
    c(<><Tag>{weight}</Tag>{rest}{M}</>, 2, num),
    c(M),
  ],
});
const core = (text, left, h) => ({
  h,
  cells: [c(M, 1, head), c(<>{text}{M}</>, 4, { ...midNum, $inset: true }), c(M, 1, left ? {} : head), ...marks(2)],
});
const calc = (layer, from, to, value, h1, er) => ({
  cells: [
    c(<>{layer}{M}</>, 1, head), c(from, 1, { $align: "right", $num: true }), c(<>{to}{M}</>, 1, num),
    c(value, 1, { $align: "right", $num: true }), c(M, 1, head), c(M, 1, head),
    c(<>{h1}{M}</>, 1, num), c(<>{er}{M}</>, 1, num),
  ],
});
const ground = (layer, target, blank) => ({
  cells: [
    c(<>{layer}{M}</>, 1, head), c(<>Ground is:{M}</>, 1, head), c(<>{target}{M}</>),
    c(blank ? "" : M, 1, head), c(M, 1, head), c(M, 1, head), ...marks(2),
  ],
});

const rows = [
  { cells: [c(<>DATE:{M}</>), ...marks(7)] },
  { cells: [c(<>Customer Part NO:    {M}</>, 4), ...marks(4)] },
  { h: 24, cells: [c(<>Customer  Requirements  {M}</>, 4, { $bold: true }), c(M, 2), ...marks(2)] },
  { cells: [c(<>Layer{M}</>, 1, head), c(<>Line Width/Space(mil){M}</>, 2, head), c(<>Control Impedance（ohm） {M}</>, 3, mid), ...marks(2)] },
  ohm("L1/L6", "5.4 mil", "50+/-10%"),
  ohm("L1", "4/7 mil", "100+/-10%"),
  ohm("L3", "5.2 mil", "50+/-10%"),
  ohm("L3/L4", "4/7 mil", "100+/-10%"),
  { h: 24, cells: [c(<>Our  Suggesting:    {M}</>, 2, { $bold: true }), c(M, 1, head), c(M, 1, head), c(M, 1, head), ...marks(3)] },
  foil("L1", "0.333oz", " +Plating", 11),
  core("3313    3.6404 mil"),
  foil("P2", "1oz", "", 8),
  core("Core   3.937 mil"),
  foil("P3", "0.5oz", ""),
  core("1080+1080+Core(27.9527)+1080+1080   39.1135 mil"),
  foil("P4", "0.5oz", ""),
  core("Core   3.937 mil", true, 21),
  foil("P5", "1oz", ""),
  core("3313    3.6404 mil", true),
  foil("L6", "0.333oz", " +Plating", 8),
  { cells: marks(8) },
  {
    h: 24,
    cells: [
      c("Overlap THK:", 3, { $align: "right" }), c(<><Tag>1.5 mm</Tag>{M}</>, 2, num),
      c(<><Typo>Meterial</Typo> :{M}</>, 1, { $fill: true }),
      c(<>FR4 IT<Tag>-180A</Tag>{M}</>, 2, { $align: "center", $fill: true }),
    ],
  },
  { cells: [c("Finish THK:", 3, { $align: "right" }), c(<>1.57 +/<Tag>-0.157 mm</Tag>{M}</>, 2, num), ...marks(3)] },
  { h: 24, cells: [c(<>Calculate  Impedance:   {M}</>, 3, { $bold: true }), ...marks(5)] },
  {
    cells: [
      c(<>Layer{M}</>, 1, head), c(<>Adjust LW/LS(mil){M}</>, 2, { ...head }), c(<>Calculate Value(Ω){M}</>, 3),
      c(<>H1(mil){M}</>, 1, { $small: true }), c(<>Er1{M}</>, 1, { $small: true }),
    ],
  },
  calc("L1/L6", "5.4 mi", "", "49.3", "3.64", "4.15"),
  calc("L1", "4/7 mi", "to  3.7/7.3 mil", "99.5", "3.64", "4.15"),
  calc("L3", "5.2 mi", "", "49.9", "3.94", "4.25"),
  calc("L3/L4", "4/7 mi", "to  3.8/7.2 mil", "100.4", "3.94", "4.25"),
  ground("L1", "L2", true),
  ground("L6", "L5"),
  ground("L3", "L2/L5"),
];

function Word() {
  return (
    <WordWindow>
      <WordTitle>
        <Icon name="word" />
        6V2E206BA0-imp - Microsoft Word
      </WordTitle>
      <Bars>
        <ControlBar>
          <Grip />
          <IconButton aria-label="Design"><Icon name="design" /></IconButton>
          <IconButton aria-label="Properties"><Icon name="props" /></IconButton>
          <IconButton aria-label="Code"><Icon name="code" /></IconButton>
          <Divider />
          <IconButton aria-label="Check box"><Icon name="tick" /></IconButton>
          <IconButton aria-label="Text box">
            <svg width="16" height="16" viewBox="0 0 16 16">
              <rect x="0.500" y="1.500" width="15" height="13" fill="#e8eefb" stroke="#4a5f9a" />
              <text x="1" y="12" fontSize="10" fontFamily="Liberation Sans" fill="#223a6c">ab|</text>
            </svg>
          </IconButton>
        </ControlBar>
        <WordMenu>
          <MenuGrip />
          {wordMenus.map(([name, key]) => (
            <WordMenuItem key={key}>{name}<Latin>(<u>{key}</u>)</Latin></WordMenuItem>
          ))}
          <WordMenuItem><Latin>Adobe PDF(<u>B</u>)</Latin></WordMenuItem>
          <WordMenuItem><Latin>Acrobat </Latin>注释<Latin>(<u>C</u>)</Latin></WordMenuItem>
        </WordMenu>
        <Toolbar>
          <Grip />
          {toolbarItems.map((id, i) => <ToolItem key={i} id={id} />)}
          <Zoom>
            <ZoomSelect aria-label="Zoom" defaultValue="100%"><option>100%</option></ZoomSelect>
            <ZoomArrow><Caret /></ZoomArrow>
          </Zoom>
          <IconButton aria-label="Help"><Icon name="help" /></IconButton>
          <Divider />
          <IconButton aria-label="Read"><Icon name="read" /></IconButton>
        </Toolbar>
      </Bars>
      <DocFrame>
        <Ruler>
          <RulerStart>
            <svg width="26" height="18" viewBox="0 0 26 18">
              <path d="M5.500 -1.500h8v3l-3 3 3 3v3h-8v-3l3-3-3-3zM5.500 10.500h8v4h-8z" fill="#fff" stroke="#000" />
              <path d="M18.500 4v5" stroke="#000" />
            </svg>
          </RulerStart>
          {Array.from({ length: 23 }, (_, i) => (
            <RulerCell key={i}><RulerNum>{(i + 1) * 2}</RulerNum></RulerCell>
          ))}
        </Ruler>
        <Page>
          <Sheet>
            <colgroup>
              {cols.map((w, i) => <col key={i} width={w} />)}
            </colgroup>
            <tbody>
              {rows.map((row, i) => (
                <Row key={i} $h={row.h}>
                  {row.cells.map(({ body, span, ...look }, j) => (
                    <Cell key={j} colSpan={span} {...look}>{body}</Cell>
                  ))}
                </Row>
              ))}
            </tbody>
          </Sheet>
        </Page>
        <ViewRow>
          {["viewLines", "viewWeb", "viewPrint", "viewOutline", "viewRead"].map((v, i) => (
            <ViewButton key={v} aria-label={v} $on={i === 1}><Icon name={v} /></ViewButton>
          ))}
          <ScrollLeft aria-label="Scroll left"><Caret left /></ScrollLeft>
          <HScroll />
        </ViewRow>
      </DocFrame>
      <StatusBar>
        <StatusCell $w={197}><span>页</span><Spacer $w={50} /><span>节</span><Spacer $w={12} /></StatusCell>
        <StatusCell $w={226}><span>位置</span><Spacer /><span>行</span><Spacer $w={33} /><span>列</span></StatusCell>
        <StatusCell $w={32}>录制</StatusCell>
        <StatusCell $w={30}>修订</StatusCell>
        <StatusCell $w={30}>扩展</StatusCell>
        <StatusCell $w={30}>改写</StatusCell>
        <StatusCell $w={66} $on>中文<Latin>(</Latin>中国<Latin>)</Latin></StatusCell>
        <StatusCell $w={46}><Icon name="bookX" w={20} /></StatusCell>
        <StatusCell $w={38} />
        <StatusCell $w={38} />
      </StatusBar>
      <LangBar>
        <Grip />
        <Icon name="sLogo" />
        <Divider />
        <Icon name="ask" />
        <Divider />
        <svg width="7" height="12" viewBox="0 0 7 12">
          <path d="M1 1h5v2H1zM0 8h7l-3.500 3z" fill="#000" />
        </svg>
      </LangBar>
    </WordWindow>
  );
}

/* ---------- input method bar ---------- */

const ImeBar = styled.div`
  position: absolute;
  left: 544px;
  top: 3px;
  width: 143px;
  height: 22px;
  display: flex;
  align-items: center;
  justify-content: space-between;
  padding: 0 2px 0 0;
  background: #f6fafe;
  border: 1px solid #a8b8cc;
  color: #3f86d2;
  font: 16px/16px "Noto Sans CJK SC", sans-serif;
`;

const ImeMode = styled.button`
  height: 20px;
  padding-bottom: 2px;
`;

/* ---------- taskbar ---------- */

const Taskbar = styled.footer`
  flex: none;
  height: 28px;
  display: flex;
  align-items: center;
  gap: 3px;
  padding: 0 2px;
  background: #d4d0c8;
  border-top: 1px solid #fff;
`;

const TaskButton = styled.button`
  flex: 0 1 51px;
  min-width: 0;
  height: 22px;
  display: flex;
  align-items: center;
  gap: 2px;
  padding-left: 4px;
  overflow: hidden;
  white-space: nowrap;
  font: 12px/18px ${caption};
  background: ${(p) => (p.$on ? "#eceae6" : "#d4d0c8")};
  border: 1px solid;
  border-color: ${(p) => (p.$on ? "#404040 #fff #fff #404040" : "#fff #404040 #404040 #fff")};
  box-shadow: ${(p) => (p.$on ? "inset 1px 1px #808080" : "inset -1px -1px #808080")};
`;

const StartButton = styled(TaskButton)`
  flex-basis: 50px;
  gap: 1px;
  padding-left: 2px;
`;

const TaskGrip = styled.span`
  flex: none;
  width: 6px;
  height: 22px;
  border-left: 1px solid #808080;
  box-shadow: inset 1px 0 #fff;
  border-right: 2px solid #a8a49c;
`;

const QuickLaunch = styled.div`
  flex: none;
  width: 72px;
  display: flex;
  justify-content: space-around;
`;

const Tray = styled.div`
  flex: none;
  width: 149px;
  height: 22px;
  margin-left: auto;
  padding: 0 16px 0 4px;
  display: flex;
  align-items: center;
  gap: 2px;
  border: 1px solid;
  border-color: #808080 #fff #fff #808080;
  font: 12px/18px ${caption};
`;

const tasks = [
  ["star", "兴..."], ["disc", "Ge..."], ["xwin", "En..."], ["floppy2", "To..."], ["globe2", "pc..."],
  ["xwin", "Pr..."], ["word", "部..."], ["note", "6v..."], ["xwin", "6v..."], ["eye", "PK..."],
  ["xwin", "Dril..."], ["excel", "6V..."], ["excel", "Q1..."], ["word", "6V...", true], ["excel", "CA..."],
  ["xwin", "Jo..."], ["disc", "CA..."], ["calc", "计..."], ["xwin", "Gr..."], ["xwin", "Gr..."],
];

function App() {
  return (
    <Screen>
      <GlobalStyle />
      <Desktop>
        <Editor />
        <Word />
        <ImeBar>
          <Icon name="sLogoTilt" w={20} h={20} />
          <ImeMode>五</ImeMode>
          <Icon name="moon" />
          <Icon name="punct" />
          <Icon name="keyboard" w={17} />
          <Icon name="person" />
          <Icon name="wrench" />
        </ImeBar>
      </Desktop>
      <Taskbar>
        <StartButton><Icon name="flag" w={18} />开始</StartButton>
        <TaskGrip />
        <QuickLaunch>
          <Icon name="desk" />
          <Icon name="clock" />
          <Icon name="globe2" />
        </QuickLaunch>
        <TaskGrip />
        {tasks.map(([icon, label, on], i) => (
          <TaskButton key={i} $on={on}><Icon name={icon} />{label}</TaskButton>
        ))}
        <Tray>
          {["tray1", "tray2", "tray3", "tray4", "tray5"].map((t) => <Icon key={t} name={t} />)}
          <Spacer />
          2:48
        </Tray>
      </Taskbar>
    </Screen>
  );
}

export default App;
